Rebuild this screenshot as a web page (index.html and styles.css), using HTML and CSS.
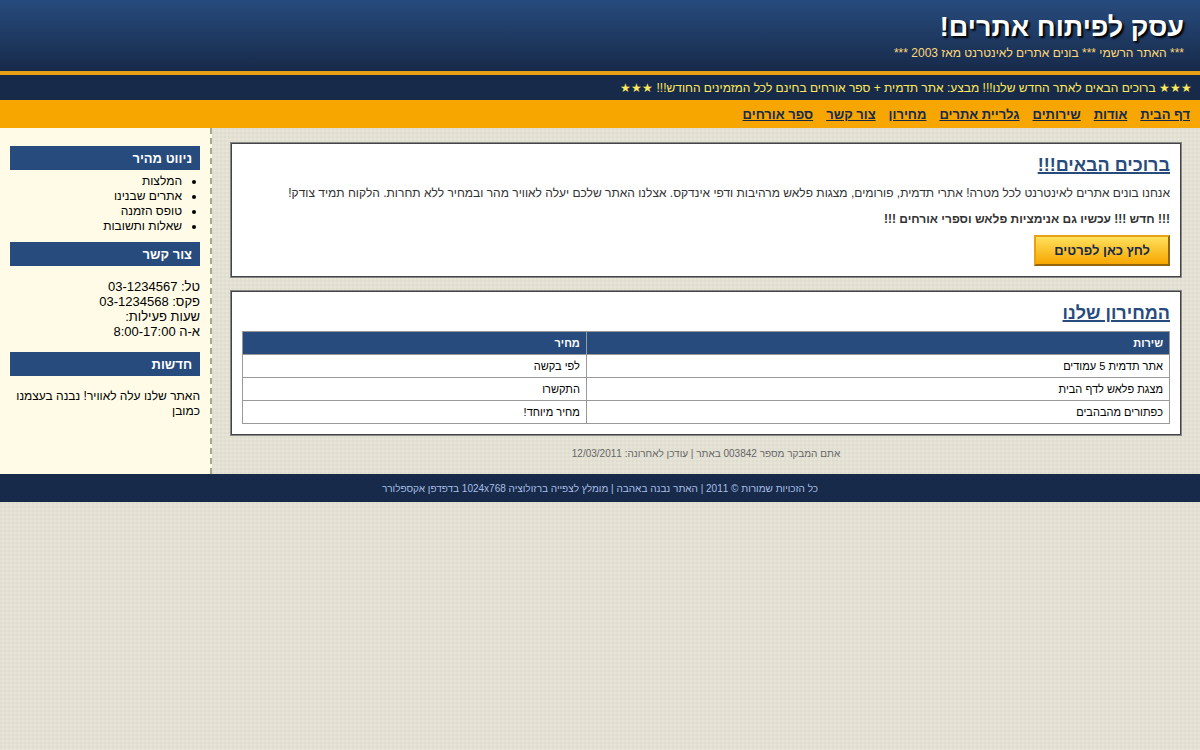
FILE: index.html
```html
<!DOCTYPE html>
<html lang="he" dir="rtl">

<head>
    <meta charset="UTF-8">
    <meta name="viewport" content="width=device-width, initial-scale=1.0">
    <title>עסק לפיתוח אתרים!</title>
    <link rel="stylesheet" href="styles.css">
</head>

<body>

    <header class="header">
        <h1>עסק לפיתוח אתרים!</h1>
        <p class="slogan">*** האתר הרשמי *** בונים אתרים לאינטרנט מאז 2003 ***</p>
    </header>

    <div class="ticker">★★★ ברוכים הבאים לאתר החדש שלנו!!! מבצע: אתר תדמית + ספר אורחים בחינם לכל המזמינים החודש!!! ★★★</div>

    <nav class="nav">
        <a href="#">דף הבית</a>
        <a href="#">אודות</a>
        <a href="#">שירותים</a>
        <a href="#">גלריית אתרים</a>
        <a href="#">מחירון</a>
        <a href="#">צור קשר</a>
        <a href="#">ספר אורחים</a>
    </nav>

    <div class="wrap">
        <main class="content">
            <section class="box">
                <h2>ברוכים הבאים!!!</h2>
                <p>אנחנו בונים אתרים לאינטרנט לכל מטרה! אתרי תדמית, פורומים, מצגות פלאש מרהיבות ודפי אינדקס. אצלנו האתר שלכם יעלה לאוויר מהר ובמחיר ללא תחרות. הלקוח תמיד צודק!</p>
                <p><b>!!! חדש !!! עכשיו גם אנימציות פלאש וספרי אורחים !!!</b></p>
                <button type="button" class="btn">לחץ כאן לפרטים</button>
            </section>

            <section class="box">
                <h2>המחירון שלנו</h2>
                <table class="prices">
                    <tr>
                        <th>שירות</th>
                        <th>מחיר</th>
                    </tr>
                    <tr>
                        <td>אתר תדמית 5 עמודים</td>
                        <td>לפי בקשה</td>
                    </tr>
                    <tr>
                        <td>מצגת פלאש לדף הבית</td>
                        <td>התקשרו</td>
                    </tr>
                    <tr>
                        <td>כפתורים מהבהבים</td>
                        <td>מחיר מיוחד!</td>
                    </tr>
                </table>
            </section>

            <div class="counter">אתם המבקר מספר 003842 באתר | עודכן לאחרונה: 12/03/2011</div>
        </main>

        <aside class="sidebar">
            <h3>ניווט מהיר</h3>
            <ul>
                <li>המלצות</li>
                <li>אתרים שבנינו</li>
                <li>טופס הזמנה</li>
                <li>שאלות ותשובות</li>
            </ul>
            <h3>צור קשר</h3>
            <p class="contact">טל: 03-1234567<br>פקס: 03-1234568<br>שעות פעילות:<br>א-ה 8:00-17:00</p>
            <h3>חדשות</h3>
            <p>האתר שלנו עלה לאוויר! נבנה בעצמנו כמובן</p>
        </aside>
    </div>

    <footer class="footer">כל הזכויות שמורות © 2011 | האתר נבנה באהבה | מומלץ לצפייה ברזולוציה 1024x768 בדפדפן אקספלורר</footer>

</body>

</html>
```
FILE: styles.css
```css
* {
    box-sizing: border-box;
}

body {
    margin: 0;
    font-family: "Liberation Sans", Arial, sans-serif;
    font-size: 12px;
    line-height: 15px;
    color: #000;
    background-color: #e8e4d8;
    background-image:
        repeating-linear-gradient(0deg, rgba(0, 0, 0, 0.02) 0 2px, transparent 2px 4px),
        repeating-linear-gradient(90deg, rgba(0, 0, 0, 0.02) 0 2px, transparent 2px 4px);
}

.header {
    padding: 10px 16px;
    background: linear-gradient(#274b7d, #172a4a);
    border-bottom: 4px solid #e6a117;
}

.header h1 {
    margin: 0;
    font-size: 27px;
    line-height: 34px;
    color: #fff;
    text-shadow: 2px 2px 2px #000;
}

.slogan {
    margin: 2px 0 0;
    color: #ffd97a;
}

.ticker {
    padding: 6px 8px 4px;
    background-color: #172a4a;
    color: #ffe95c;
}

.nav {
    display: flex;
    flex-wrap: wrap;
    gap: 13px;
    padding: 7px 10px 5px;
    background-color: #f7a600;
    font-size: 13px;
    font-weight: bold;
    line-height: 16px;
}

.nav a {
    color: #172a4a;
}

.wrap {
    display: flex;
}

.content {
    flex: 1;
    padding: 14px 18px;
}

/* double frame: grey outside, dark inside */
.box {
    margin-bottom: 12px;
    padding: 11px;
    background-color: #fff;
    border: 1px solid #888;
    box-shadow: inset 0 0 0 1px #444;
}

.box h2 {
    margin: 0 0 6px;
    font-size: 18px;
    line-height: 23px;
    color: #274b7d;
    text-decoration: underline 2px;
}

.box p {
    margin: 0 0 6px;
    line-height: 20px;
    color: #333;
}

.btn {
    display: block;
    padding: 6px 18px;
    font-family: inherit;
    font-size: 13px;
    font-weight: bold;
    line-height: 15px;
    color: #172a4a;
    background: linear-gradient(#ffe05c, #f7a600);
    border: 2px outset #e6a117;
    cursor: pointer;
}

.prices {
    width: 100%;
    border-collapse: collapse;
    font-size: 11px;
    line-height: 14px;
}

.prices th,
.prices td {
    padding: 4px 6px;
    border: 1px solid #999;
    text-align: right;
}

.prices th {
    background-color: #274b7d;
    color: #fff;
}

.counter {
    font-size: 10px;
    line-height: 12px;
    text-align: center;
    color: #666;
}

.sidebar {
    width: 212px;
    padding: 10px;
    background-color: #fffbe6;
    border-right: 2px dashed #aaa78e;
}

.sidebar h3 {
    margin: 8px 0 4px;
    padding: 5px 8px 3px;
    font-size: 13px;
    line-height: 16px;
    background-color: #274b7d;
    color: #fff;
}

.sidebar ul {
    margin: 4px 0 8px;
    padding: 0 18px 0 0;
}

.sidebar p {
    margin: 13px 0;
}

.sidebar .contact {
    font-size: 13px;
}

.footer {
    padding: 9px 8px 7px;
    font-size: 10px;
    line-height: 12px;
    text-align: center;
    background-color: #172a4a;
    color: #a9bfe6;
}
```
